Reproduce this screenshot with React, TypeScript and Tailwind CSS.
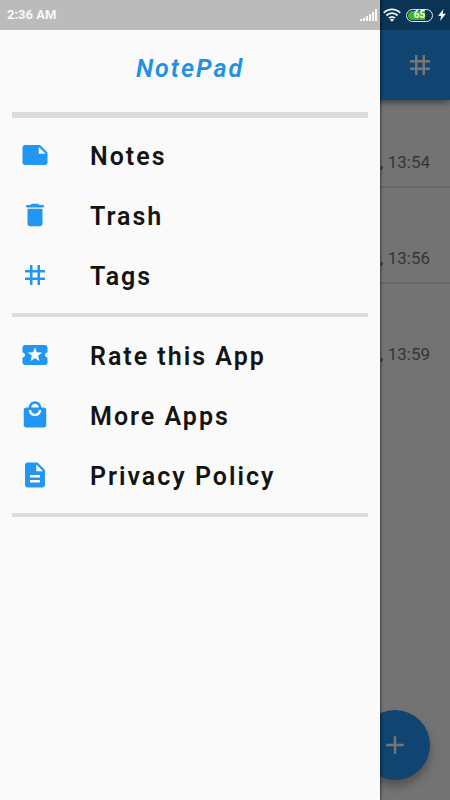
import type { IconType } from "react-icons";
import {
  MdAdd,
  MdDelete,
  MdDescription,
  MdLocalActivity,
  MdLocalMall,
  MdNote,
  MdTag,
} from "react-icons/md";

type Entry = { label: string; icon: IconType };

const main: Entry[] = [
  { label: "Notes", icon: MdNote },
  { label: "Trash", icon: MdDelete },
  { label: "Tags", icon: MdTag },
];

const more: Entry[] = [
  { label: "Rate this App", icon: MdLocalActivity },
  { label: "More Apps", icon: MdLocalMall },
  { label: "Privacy Policy", icon: MdDescription },
];

const times = ["13:54", "13:56", "13:59"];

function MenuGroup({ entries }: { entries: Entry[] }) {
  return (
    <ul>
      {entries.map(({ label, icon: Icon }) => (
        <li key={label}>
          <button type="button" className="flex h-15 w-full items-center gap-10 px-5 text-left">
            <Icon className="size-[30px] shrink-0 text-[#2196f3]" aria-hidden />
            <span className="pt-1 text-[25px] leading-8 font-semibold tracking-[2px] text-[#141414]">{label}</span>
          </button>
        </li>
      ))}
    </ul>
  );
}

function StatusBar() {
  return (
    <div className="absolute inset-x-0 top-0 z-20 flex h-[30px] items-center bg-black/25 pr-1 pl-[7px] text-white">
      <span className="flex-1 text-[13px] leading-4 font-bold text-white/90">2:36 AM</span>
      <div className="flex items-center gap-1">
        <svg viewBox="0 0 18 12" className="mr-px h-3 w-[18px] fill-white/90" aria-hidden>
          <rect x="0" y="10" width="2" height="2" />
          <rect x="3" y="9" width="2" height="3" />
          <rect x="6" y="7" width="2" height="5" />
          <rect x="9" y="5" width="2" height="7" />
          <rect x="12" y="3" width="2" height="9" />
          <rect x="15" y="0" width="2" height="12" />
        </svg>
        <svg viewBox="0 0 18 14" className="h-3.5 w-[18px]" fill="none" stroke="#eef3f6" strokeWidth="1.8" aria-hidden>
          <path d="M.8 4.8a11.6 11.6 0 0 1 16.4 0M3.4 7.5a7.9 7.9 0 0 1 11.2 0M6 10.1a4.2 4.2 0 0 1 6 0" />
          <path d="M9 13.8 6.9 11.7a3 3 0 0 1 4.2 0z" fill="#eef3f6" stroke="none" />
        </svg>
        <div className="ml-px flex items-center">
          <div className="flex h-[13px] w-[27px] rounded-full border border-[#dfe8ee] p-px">
            <div className="flex w-full items-center justify-center rounded-full bg-linear-to-r from-[#46b31b] from-75% to-transparent to-75% text-[10px] leading-none font-bold">
              65
            </div>
          </div>
        </div>
        <svg viewBox="0 0 8 12" className="ml-px h-3 w-2 fill-[#eef3f6]" aria-hidden>
          <path d="M5.4 0 0 7h3.1L2 12l6-7.2H4.8z" />
        </svg>
      </div>
    </div>
  );
}

export default function App() {
  return (
    <div className="relative flex h-screen flex-col overflow-hidden bg-[#fafafa] font-[Roboto,sans-serif]">
      <StatusBar />

      <header className="z-0 flex h-[100px] shrink-0 items-center justify-end bg-[#2196f3] px-[15px] pt-[30px] text-white shadow-[0_3px_6px_rgba(0,0,0,0.4)]">
        <button type="button" aria-label="Tags">
          <MdTag className="size-[30px]" />
        </button>
      </header>

      <main className="-mt-2 flex-1">
        <ul>
          {times.map((time, i) => (
            <li
              key={time}
              className={`flex h-24 items-end justify-end border-b-2 px-5 pb-3 text-[17px] leading-6 text-[#757575] ${
                i < times.length - 1 ? "border-[#e3e3e3]" : "border-transparent"
              }`}
            >
              , {time}
            </li>
          ))}
        </ul>
      </main>

      <button
        type="button"
        aria-label="New note"
        className="absolute right-5 bottom-5 flex size-[70px] items-center justify-center rounded-full bg-[#2196f3] text-white shadow-[0_6px_10px_rgba(0,0,0,0.3)]"
      >
        <MdAdd className="size-[30px]" />
      </button>

      <div className="absolute inset-0 bg-black/54" />

      <nav className="absolute inset-y-0 left-0 right-[70px] z-10 bg-[#fafafa] pt-[30px] shadow-[0_0_3px_rgba(0,0,0,0.9)]">
        <h1 className="flex h-[76px] items-center justify-center pt-0.5 text-[25px] leading-8 font-semibold tracking-[2px] text-[#2191e5] italic">
          NotePad
        </h1>
        <hr className="mx-3 mt-1.5 mb-[7px] h-1.5 border-0 bg-[#dcdcdc]" />
        <MenuGroup entries={main} />
        <hr className="mx-3 my-2 h-1 border-0 bg-[#dcdcdc]" />
        <MenuGroup entries={more} />
        <hr className="mx-3 my-2 h-1 border-0 bg-[#dcdcdc]" />
      </nav>
    </div>
  );
}
